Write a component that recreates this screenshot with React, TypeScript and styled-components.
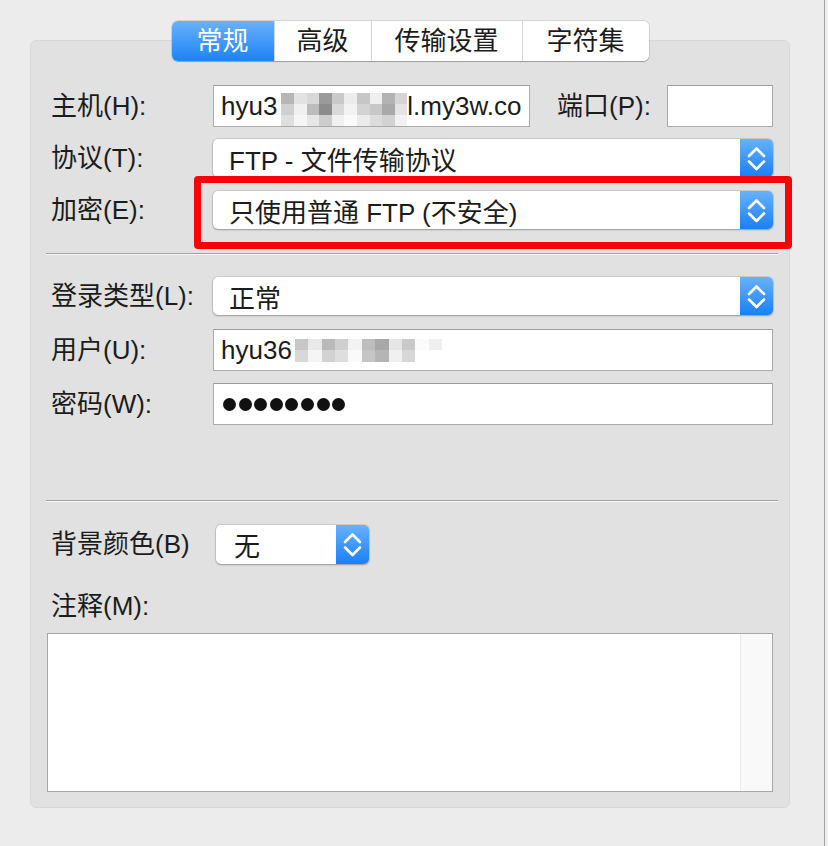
import React from "react";
import styled, {createGlobalStyle} from "styled-components";

const GlobalStyle = createGlobalStyle`
  html, body {
    margin: 0;
    padding: 0;
    background: #ececec;
  }

  body {
    font-family: "Liberation Sans", "Noto Sans CJK SC", sans-serif;
    color: #1c1c1c;
  }
`

const Page = styled.div`
  display: flex;
  width: 828px;
  height: 846px;
  overflow: hidden;
`

const Main = styled.div`
  width: 824px;
  flex-shrink: 0;
  padding: 21px 34px 0 30px;
  box-sizing: border-box;
`

const EdgeStrip = styled.div`
  flex: 1;
  border-left: 1px solid #a2a2a2;
  background: #ededed;
`

const TabBar = styled.div`
  display: flex;
  justify-content: center;
  margin-bottom: -21px;
  position: relative;
  z-index: 1;
`

const Tabs = styled.div`
  display: inline-flex;
  height: 40px;
  background: #fff;
  border-radius: 6px;
  overflow: hidden;
  box-shadow: 0 0 0 1px rgba(0, 0, 0, 0.1), 0 1px 1px rgba(0, 0, 0, 0.22);
`

const Tab = styled.div<{ $active?: boolean; $width: number }>`
  width: ${p => p.$width}px;
  box-sizing: border-box;
  text-align: center;
  font-size: 26px;
  line-height: 40px;
  color: ${p => p.$active ? "#fff" : "#1c1c1c"};
  background: ${p => p.$active ? "linear-gradient(#68b2fb, #1d82f6)" : "#fff"};

  & + & {
    border-left: 1px solid #d6d6d6;
  }
`

const Panel = styled.div`
  background: #e1e1e1;
  border: 1px solid #d9d9d9;
  border-radius: 6px;
  padding: 44px 16px 15px 20px;
`

const FormGrid = styled.div<{ $gap: number }>`
  display: grid;
  grid-template-columns: 162px minmax(0, 1fr);
  grid-auto-rows: 42px;
  row-gap: ${p => p.$gap}px;
  align-items: center;
`

const Label = styled.div`
  font-size: 26px;
  line-height: 30px;
  white-space: nowrap;
`

const Control = styled.div`
  position: relative;
  display: flex;
  align-items: center;
  height: 100%;
  min-width: 0;
`

const Highlight = styled.div`
  position: absolute;
  inset: -13px -19px -18px -19px;
  border: 7px solid #f70505;
  border-radius: 4px;
  pointer-events: none;
`

const TextBox = styled.div<{ $width?: number }>`
  display: flex;
  align-items: center;
  box-sizing: border-box;
  height: 42px;
  ${p => p.$width ? `width: ${p.$width}px; flex-shrink: 0;` : "flex: 1;"}
  min-width: 0;
  padding: 0 7px;
  background: #fff;
  border: 1px solid #ababab;
  border-top-color: #9c9c9c;
  font-size: 26px;
  white-space: nowrap;
  overflow: hidden;
`

const InlineLabel = styled(Label)`
  margin: 0 16px 0 27px;
`

const Mosaic = styled.span<{ $cols: number; $w: number; $h: number }>`
  display: inline-grid;
  grid-template-columns: repeat(${p => p.$cols}, ${p => p.$w}px);
  grid-auto-rows: ${p => p.$h}px;
  flex-shrink: 0;
`

const Cell = styled.span<{ $tone: string }>`
  background: ${p => p.$tone};
`

const SelectBox = styled.div<{ $width?: number; $height?: number }>`
  display: flex;
  align-items: center;
  box-sizing: border-box;
  height: ${p => p.$height ?? 38}px;
  ${p => p.$width ? `width: ${p.$width}px;` : "flex: 1;"}
  background: #fff;
  border-radius: 5px;
  box-shadow: 0 0 0 1px rgba(0, 0, 0, 0.09), 0 1px 2px rgba(0, 0, 0, 0.25);
  overflow: hidden;
`

const SelectText = styled.div<{ $pad: number }>`
  flex: 1;
  padding-left: ${p => p.$pad}px;
  font-size: 26px;
  white-space: nowrap;
`

const Stepper = styled.div`
  display: flex;
  align-items: center;
  justify-content: center;
  width: 33px;
  height: 100%;
  background: linear-gradient(#66b2fd, #1a7ff6);
`

const Separator = styled.div<{ $top: number; $bottom: number }>`
  height: 1px;
  background: #a3a3a3;
  border-bottom: 1px solid #f7f7f7;
  margin: ${p => p.$top}px -5px ${p => p.$bottom}px;
`

const Dots = styled.div`
  display: flex;
  gap: 2.6px;
  padding-left: 2px;
`

const Dot = styled.span`
  width: 13px;
  height: 13px;
  border-radius: 50%;
  background: #111;
`

const InlineRow = styled.div`
  display: flex;
  align-items: center;
  height: 40px;
`

const RowLabel = styled(Label)`
  width: 165px;
  flex-shrink: 0;
`

const NoteLabel = styled(Label)`
  margin-top: 27px;
`

const NoteArea = styled.div`
  display: flex;
  justify-content: flex-end;
  height: 159px;
  margin: 12px 0 0 -4px;
  box-sizing: border-box;
  background: #fff;
  border: 1px solid #a6a6a6;
`

const ScrollTrack = styled.div`
  width: 31px;
  background: #f9f9f9;
  border-left: 1px solid #ececec;
`

const hostMosaic = [
    "#b6b6b6", "#e2e2e2", "#d8d8d8", "#9a9a9a", "#c9c9c9", "#ececec", "#c6c6c6", "#efefef", "#b3b3b3", "#d5d5d5",
    "#d0d0d0", "#f0f0f0", "#bcbcbc", "#8c8c8c", "#d9d9d9", "#f3f3f3", "#d3d3d3", "#c8c8c8", "#a9a9a9", "#e4e4e4",
    "#dedede", "#f6f6f6", "#e6e6e6", "#cdcdcd", "#f1f1f1", "#fafafa", "#ebebeb", "#dcdcdc", "#d2d2d2", "#f2f2f2",
]

const userMosaic = [
    "#c7c7c7", "#e9e9e9", "#b9b9b9", "#cfcfcf", "#f2f2f2", "#bdbdbd", "#a8a8a8", "#e6e6e6", "#c9c9c9", "#fbfbfb", "#efefef",
    "#d8d8d8", "#f5f5f5", "#d2d2d2", "#dedede", "#fafafa", "#c5c5c5", "#b5b5b5", "#f0f0f0", "#d7d7d7", "#ffffff", "#ffffff",
]

function Chevrons() {
    return (
        <svg width="33" height="38" viewBox="0 0 33 38">
            <polyline points="9,17 16.5,9.5 24,17" fill="none" stroke="#fff" strokeWidth="2.6"
                      strokeLinecap="round" strokeLinejoin="round"/>
            <polyline points="9,22.5 16.5,30 24,22.5" fill="none" stroke="#fff" strokeWidth="2.6"
                      strokeLinecap="round" strokeLinejoin="round"/>
        </svg>
    )
}

function Select(props: { value: string; width?: number; height?: number; pad?: number }) {
    return (
        <SelectBox $width={props.width} $height={props.height}>
            <SelectText $pad={props.pad ?? 16}>{props.value}</SelectText>
            <Stepper><Chevrons/></Stepper>
        </SelectBox>
    )
}

const tabs = [
    {name: "常规", width: 102},
    {name: "高级", width: 97},
    {name: "传输设置", width: 151},
    {name: "字符集", width: 127},
];

function App() {
    return (
        <Page>
            <GlobalStyle/>
            <Main>
                <TabBar>
                    <Tabs>
                        {tabs.map((t, i) => <Tab key={t.name} $width={t.width} $active={i === 0}>{t.name}</Tab>)}
                    </Tabs>
                </TabBar>
                <Panel>
                    <FormGrid $gap={10}>
                        <Label>主机(H):</Label>
                        <Control>
                            <TextBox $width={317}>
                                hyu3
                                <Mosaic $cols={10} $w={12.6} $h={11} style={{alignSelf: "flex-end", marginLeft: 4}}>
                                    {hostMosaic.map((c, i) => <Cell key={i} $tone={c}/>)}
                                </Mosaic>
                                l.my3w.co
                            </TextBox>
                            <InlineLabel>端口(P):</InlineLabel>
                            <TextBox $width={106}/>
                        </Control>

                        <Label>协议(T):</Label>
                        <Control>
                            <Select value="FTP - 文件传输协议"/>
                        </Control>

                        <Label>加密(E):</Label>
                        <Control>
                            <Select value="只使用普通 FTP (不安全)"/>
                            <Highlight/>
                        </Control>
                    </FormGrid>

                    <Separator $top={22} $bottom={20}/>

                    <FormGrid $gap={12}>
                        <Label>登录类型(L):</Label>
                        <Control>
                            <Select value="正常"/>
                        </Control>

                        <Label>用户(U):</Label>
                        <Control>
                            <TextBox>
                                hyu36
                                <Mosaic $cols={11} $w={13.4} $h={11.5} style={{marginLeft: 3}}>
                                    {userMosaic.map((c, i) => <Cell key={i} $tone={c}/>)}
                                </Mosaic>
                            </TextBox>
                        </Control>

                        <Label>密码(W):</Label>
                        <Control>
                            <TextBox>
                                <Dots>
                                    {Array.from({length: 8}).map((_, i) => <Dot key={i}/>)}
                                </Dots>
                            </TextBox>
                        </Control>
                    </FormGrid>

                    <Separator $top={75} $bottom={22}/>

                    <InlineRow>
                        <RowLabel>背景颜色(B)</RowLabel>
                        <Select value="无" width={153} height={39} pad={18}/>
                    </InlineRow>

                    <NoteLabel>注释(M):</NoteLabel>
                    <NoteArea>
                        <ScrollTrack/>
                    </NoteArea>
                </Panel>
            </Main>
            <EdgeStrip/>
        </Page>
    );
}

export default App;
